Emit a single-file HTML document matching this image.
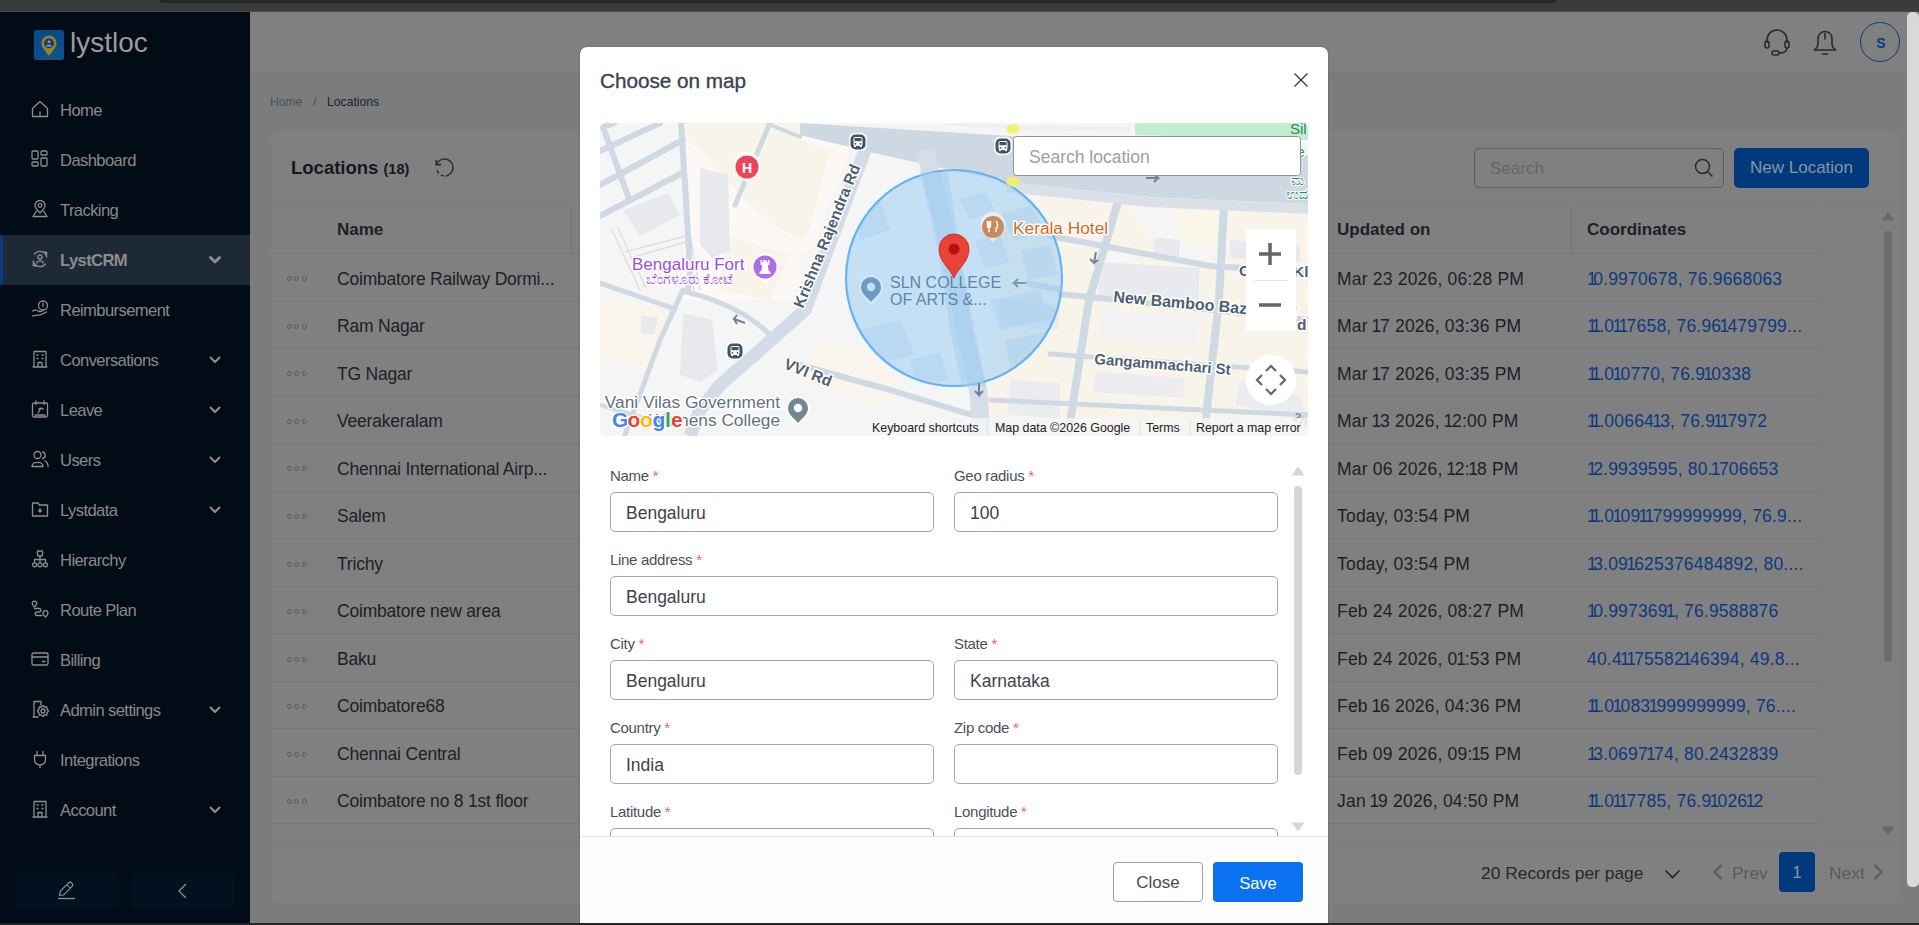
<!DOCTYPE html>
<html><head><meta charset="utf-8"><title>Choose on map</title><style>
*{box-sizing:border-box;margin:0;padding:0}
html,body{width:1919px;height:925px;overflow:hidden;background:#7a7c7d;font-family:"Liberation Sans",sans-serif}
.a{position:absolute}
.t{position:absolute;white-space:nowrap;line-height:20px;height:20px}
</style></head><body>
<div class="a" style="left:0;top:0;width:1919px;height:12px;background:#3b3b3b"></div>
<div class="a" style="left:0;top:11px;width:1919px;height:1px;background:#484848"></div>
<div class="a" style="left:160px;top:0;width:1396px;height:3px;background:#272727;border-radius:0 0 6px 6px"></div>
<div class="a" style="left:0;top:12px;width:250px;height:911px;background:#020c17"></div>
<div class="a" style="left:34px;top:30px;width:30px;height:30px;border-radius:3px;background:linear-gradient(160deg,#044a8c 0%,#0b4f8a 60%,#0e5590 100%)"></div>
<svg class="a" style="left:34px;top:30px" width="30" height="30" viewBox="0 0 30 30"><path d="M15 26 C10 19.5 7.5 17 7.5 13 A7.5 7.5 0 0 1 22.5 13 C22.5 17 20 19.5 15 26Z" fill="#9a8318"/><circle cx="15" cy="13.2" r="5" fill="#1b3a78"/><circle cx="15" cy="11.8" r="1.4" fill="#8a9ab8"/><path d="M11.8 16.5 C12.5 14.2 17.5 14.2 18.2 16.5Z" fill="#8a9ab8"/></svg>
<div class="t" style="left:70px;top:26px;font-size:28px;line-height:34px;height:34px;color:#9b9b9b;letter-spacing:0px">lystloc</div>
<div class="t" style="left:60px;top:100.5px;font-size:16.6px;color:#898989;font-weight:normal;letter-spacing:-0.6px">Home</div>
<svg class="a" style="left:31px;top:100px" width="18" height="18" viewBox="0 0 18 18"><path d="M1.5 8.5 L9 1.5 L16.5 8.5 V16.5 H1.5 Z M9 12 V16.5" stroke="#8e8e8e" stroke-width="1.3" fill="none" stroke-linecap="round" stroke-linejoin="round"/></svg>
<div class="t" style="left:60px;top:150.5px;font-size:16.6px;color:#898989;font-weight:normal;letter-spacing:-0.6px">Dashboard</div>
<svg class="a" style="left:31px;top:150px" width="18" height="18" viewBox="0 0 18 18"><rect x="1" y="1" width="6" height="8" rx="1" stroke="#8e8e8e" stroke-width="1.3" fill="none" stroke-linecap="round" stroke-linejoin="round"/><rect x="10" y="1" width="6" height="4" rx="1" stroke="#8e8e8e" stroke-width="1.3" fill="none" stroke-linecap="round" stroke-linejoin="round"/><rect x="1" y="12" width="6" height="4" rx="1" stroke="#8e8e8e" stroke-width="1.3" fill="none" stroke-linecap="round" stroke-linejoin="round"/><rect x="10" y="8" width="6" height="8" rx="1" stroke="#8e8e8e" stroke-width="1.3" fill="none" stroke-linecap="round" stroke-linejoin="round"/></svg>
<div class="t" style="left:60px;top:200.5px;font-size:16.6px;color:#898989;font-weight:normal;letter-spacing:-0.6px">Tracking</div>
<svg class="a" style="left:31px;top:200px" width="18" height="18" viewBox="0 0 18 18"><path d="M9 13 C5 9 4 7.5 4 5.5 A5 5 0 0 1 14 5.5 C14 7.5 13 9 9 13 Z" stroke="#8e8e8e" stroke-width="1.3" fill="none" stroke-linecap="round" stroke-linejoin="round"/><circle cx="9" cy="5.5" r="1.8" stroke="#8e8e8e" stroke-width="1.3" fill="none" stroke-linecap="round" stroke-linejoin="round"/><path d="M5.5 11 L2 16.5 H16 L12.5 11" stroke="#8e8e8e" stroke-width="1.3" fill="none" stroke-linecap="round" stroke-linejoin="round"/></svg>
<div class="a" style="left:0;top:235px;width:250px;height:50px;background:#1e2937"></div>
<div class="a" style="left:0;top:235px;width:3px;height:50px;background:#0b3a7e"></div>
<div class="t" style="left:60px;top:250.5px;font-size:16.6px;color:#8c8c8c;font-weight:bold;letter-spacing:-0.6px">LystCRM</div>
<svg class="a" style="left:31px;top:250px" width="18" height="18" viewBox="0 0 18 18"><path d="M2.2 11 A7 7 0 0 0 14.5 14 M15.8 7 A7 7 0 0 0 3.5 4" stroke="#8e8e8e" stroke-width="1.3" fill="none" stroke-linecap="round" stroke-linejoin="round"/><path d="M13 1.8 L15.8 2.5 L15.5 5.3 M5 16.2 L2.2 15.5 L2.5 12.7" stroke="#8e8e8e" stroke-width="1.3" fill="none" stroke-linecap="round" stroke-linejoin="round"/><circle cx="9" cy="7" r="2" stroke="#8e8e8e" stroke-width="1.3" fill="none" stroke-linecap="round" stroke-linejoin="round"/><path d="M5.8 12.8 C6.2 10.2 11.8 10.2 12.2 12.8" stroke="#8e8e8e" stroke-width="1.3" fill="none" stroke-linecap="round" stroke-linejoin="round"/></svg>
<svg class="a" style="left:209px;top:256px" width="12" height="8" viewBox="0 0 12 8"><path d="M1.5 1.5 L6 6 L10.5 1.5" stroke="#8e8e8e" stroke-width="2.8" fill="none" stroke-linecap="round" stroke-linejoin="round"/></svg>
<div class="t" style="left:60px;top:300.5px;font-size:16.6px;color:#898989;font-weight:normal;letter-spacing:-0.6px">Reimbursement</div>
<svg class="a" style="left:31px;top:300px" width="18" height="18" viewBox="0 0 18 18"><circle cx="12" cy="5.5" r="4.5" stroke="#8e8e8e" stroke-width="1.3" fill="none" stroke-linecap="round" stroke-linejoin="round"/><path d="M12 3.5 V6.5" stroke="#8e8e8e" stroke-width="1.3" fill="none" stroke-linecap="round" stroke-linejoin="round"/><path d="M1.5 11 C4 9.5 6 10 8 11.5 H11 M1.5 16 C5 14.5 9 16.5 15.5 12" stroke="#8e8e8e" stroke-width="1.3" fill="none" stroke-linecap="round" stroke-linejoin="round"/></svg>
<div class="t" style="left:60px;top:350.5px;font-size:16.6px;color:#898989;font-weight:normal;letter-spacing:-0.6px">Conversations</div>
<svg class="a" style="left:31px;top:350px" width="18" height="18" viewBox="0 0 18 18"><path d="M2 17 H16 M3 17 V1.5 H15 V17 M7 17 V12.5 H11 V17 M6 5 H7 M11 5 H12 M6 8.5 H7 M11 8.5 H12" stroke="#8e8e8e" stroke-width="1.3" fill="none" stroke-linecap="round" stroke-linejoin="round"/></svg>
<svg class="a" style="left:209px;top:356px" width="12" height="8" viewBox="0 0 12 8"><path d="M1.5 1.5 L6 6 L10.5 1.5" stroke="#8e8e8e" stroke-width="2" fill="none" stroke-linecap="round" stroke-linejoin="round"/></svg>
<div class="t" style="left:60px;top:400.5px;font-size:16.6px;color:#898989;font-weight:normal;letter-spacing:-0.6px">Leave</div>
<svg class="a" style="left:31px;top:400px" width="18" height="18" viewBox="0 0 18 18"><rect x="1.5" y="3" width="15" height="14" rx="1.5" stroke="#8e8e8e" stroke-width="1.3" fill="none" stroke-linecap="round" stroke-linejoin="round"/><path d="M5 1 V4.5 M13 1 V4.5 M4 15 H14 M7 13 L10 8 M8 9 C9 8 11 8 12 9" stroke="#8e8e8e" stroke-width="1.3" fill="none" stroke-linecap="round" stroke-linejoin="round"/></svg>
<svg class="a" style="left:209px;top:406px" width="12" height="8" viewBox="0 0 12 8"><path d="M1.5 1.5 L6 6 L10.5 1.5" stroke="#8e8e8e" stroke-width="2" fill="none" stroke-linecap="round" stroke-linejoin="round"/></svg>
<div class="t" style="left:60px;top:450.5px;font-size:16.6px;color:#898989;font-weight:normal;letter-spacing:-0.6px">Users</div>
<svg class="a" style="left:31px;top:450px" width="18" height="18" viewBox="0 0 18 18"><circle cx="6.5" cy="5" r="3.5" stroke="#8e8e8e" stroke-width="1.3" fill="none" stroke-linecap="round" stroke-linejoin="round"/><path d="M1 16.5 C1 11 12 11 12 16.5 Z" stroke="#8e8e8e" stroke-width="1.3" fill="none" stroke-linecap="round" stroke-linejoin="round"/><path d="M11.5 2 A3.3 3.3 0 0 1 11.5 8.5 M14 11 C16 12 17 13.5 17 16.5" stroke="#8e8e8e" stroke-width="1.3" fill="none" stroke-linecap="round" stroke-linejoin="round"/></svg>
<svg class="a" style="left:209px;top:456px" width="12" height="8" viewBox="0 0 12 8"><path d="M1.5 1.5 L6 6 L10.5 1.5" stroke="#8e8e8e" stroke-width="2" fill="none" stroke-linecap="round" stroke-linejoin="round"/></svg>
<div class="t" style="left:60px;top:500.5px;font-size:16.6px;color:#898989;font-weight:normal;letter-spacing:-0.6px">Lystdata</div>
<svg class="a" style="left:31px;top:500px" width="18" height="18" viewBox="0 0 18 18"><path d="M1.5 3 H7 L8.5 5 H16.5 V16 H1.5 Z" stroke="#8e8e8e" stroke-width="1.3" fill="none" stroke-linecap="round" stroke-linejoin="round"/><path d="M9 8.5 V12 M7.5 10.5 L9 12 L10.5 10.5" stroke="#8e8e8e" stroke-width="1.3" fill="none" stroke-linecap="round" stroke-linejoin="round"/></svg>
<svg class="a" style="left:209px;top:506px" width="12" height="8" viewBox="0 0 12 8"><path d="M1.5 1.5 L6 6 L10.5 1.5" stroke="#8e8e8e" stroke-width="2" fill="none" stroke-linecap="round" stroke-linejoin="round"/></svg>
<div class="t" style="left:60px;top:550.5px;font-size:16.6px;color:#898989;font-weight:normal;letter-spacing:-0.6px">Hierarchy</div>
<svg class="a" style="left:31px;top:550px" width="18" height="18" viewBox="0 0 18 18"><rect x="6.5" y="1" width="5" height="5" rx="0.8" stroke="#8e8e8e" stroke-width="1.3" fill="none" stroke-linecap="round" stroke-linejoin="round"/><path d="M9 6 V9 M3.5 12.5 V9.5 H14.5 V12.5 M9 9.5 V12.5" stroke="#8e8e8e" stroke-width="1.3" fill="none" stroke-linecap="round" stroke-linejoin="round"/><circle cx="3.5" cy="14.8" r="2" stroke="#8e8e8e" stroke-width="1.3" fill="none" stroke-linecap="round" stroke-linejoin="round"/><circle cx="9" cy="14.8" r="2" stroke="#8e8e8e" stroke-width="1.3" fill="none" stroke-linecap="round" stroke-linejoin="round"/><circle cx="14.5" cy="14.8" r="2" stroke="#8e8e8e" stroke-width="1.3" fill="none" stroke-linecap="round" stroke-linejoin="round"/></svg>
<div class="t" style="left:60px;top:600.5px;font-size:16.6px;color:#898989;font-weight:normal;letter-spacing:-0.6px">Route Plan</div>
<svg class="a" style="left:31px;top:600px" width="18" height="18" viewBox="0 0 18 18"><path d="M3.5 7 C1.5 5 1.2 4.2 1.2 3.5 A2.3 2.3 0 0 1 5.8 3.5 C5.8 4.2 5.5 5 3.5 7Z" stroke="#8e8e8e" stroke-width="1.3" fill="none" stroke-linecap="round" stroke-linejoin="round"/><path d="M14.5 17 C12.2 14.8 12 14 12 13.2 A2.5 2.5 0 0 1 17 13.2 C17 14 16.8 14.8 14.5 17Z" stroke="#8e8e8e" stroke-width="1.3" fill="none" stroke-linecap="round" stroke-linejoin="round"/><path d="M3.5 8.5 L8 8.5 C10.5 8.5 10.5 12 8 12 L6 12 C3.5 12 3.5 15.5 6 15.5 L11 15.5" stroke="#8e8e8e" stroke-width="1.3" fill="none" stroke-linecap="round" stroke-linejoin="round" stroke-dasharray="0"/></svg>
<div class="t" style="left:60px;top:650.5px;font-size:16.6px;color:#898989;font-weight:normal;letter-spacing:-0.6px">Billing</div>
<svg class="a" style="left:31px;top:650px" width="18" height="18" viewBox="0 0 18 18"><rect x="1" y="3" width="16" height="12" rx="1.5" stroke="#8e8e8e" stroke-width="1.3" fill="none" stroke-linecap="round" stroke-linejoin="round"/><path d="M1 7 H17 M11.5 11.5 H14" stroke="#8e8e8e" stroke-width="1.3" fill="none" stroke-linecap="round" stroke-linejoin="round"/></svg>
<div class="t" style="left:60px;top:700.5px;font-size:16.6px;color:#898989;font-weight:normal;letter-spacing:-0.6px">Admin settings</div>
<svg class="a" style="left:31px;top:700px" width="18" height="18" viewBox="0 0 18 18"><path d="M2 17 H7 M3 17 V1.5 H10 V5" stroke="#8e8e8e" stroke-width="1.3" fill="none" stroke-linecap="round" stroke-linejoin="round"/><circle cx="12" cy="11" r="2" stroke="#8e8e8e" stroke-width="1.3" fill="none" stroke-linecap="round" stroke-linejoin="round"/><path d="M12 5.5 L13.5 7 L15.8 6.8 L16 9 L17.5 11 L16 13 L15.8 15.2 L13.5 15 L12 16.5 L10.5 15 L8.2 15.2 L8 13 L6.5 11 L8 9 L8.2 6.8 L10.5 7 Z" stroke="#8e8e8e" stroke-width="1.3" fill="none" stroke-linecap="round" stroke-linejoin="round"/></svg>
<svg class="a" style="left:209px;top:706px" width="12" height="8" viewBox="0 0 12 8"><path d="M1.5 1.5 L6 6 L10.5 1.5" stroke="#8e8e8e" stroke-width="2" fill="none" stroke-linecap="round" stroke-linejoin="round"/></svg>
<div class="t" style="left:60px;top:750.5px;font-size:16.6px;color:#898989;font-weight:normal;letter-spacing:-0.6px">Integrations</div>
<svg class="a" style="left:31px;top:750px" width="18" height="18" viewBox="0 0 18 18"><path d="M6 1.5 V5.5 M12 1.5 V5.5 M3.5 5.5 H14.5 V10 A5.5 5 0 0 1 3.5 10 Z M9 15 V17.5" stroke="#8e8e8e" stroke-width="1.3" fill="none" stroke-linecap="round" stroke-linejoin="round"/></svg>
<div class="t" style="left:60px;top:800.5px;font-size:16.6px;color:#898989;font-weight:normal;letter-spacing:-0.6px">Account</div>
<svg class="a" style="left:31px;top:800px" width="18" height="18" viewBox="0 0 18 18"><path d="M2 17 H16 M3 17 V1.5 H15 V17 M7 17 V12.5 H11 V17 M6 5 H7 M11 5 H12 M6 8.5 H7 M11 8.5 H12" stroke="#8e8e8e" stroke-width="1.3" fill="none" stroke-linecap="round" stroke-linejoin="round"/></svg>
<svg class="a" style="left:209px;top:806px" width="12" height="8" viewBox="0 0 12 8"><path d="M1.5 1.5 L6 6 L10.5 1.5" stroke="#8e8e8e" stroke-width="2" fill="none" stroke-linecap="round" stroke-linejoin="round"/></svg>
<div class="a" style="left:15px;top:872px;width:104px;height:37px;border-radius:5px;background:#03101f"></div>
<div class="a" style="left:131px;top:872px;width:104px;height:37px;border-radius:5px;background:#03101f"></div>
<svg class="a" style="left:56px;top:879px" width="22" height="22" viewBox="0 0 22 22"><path d="M3.5 16.5 L4.2 12.26 L12.33 4.13 A2.5 2.5 0 0 1 15.87 7.67 L7.74 15.8 Z M10.9 5.6 L14.4 9.1" stroke="#8e8e8e" stroke-width="1.2" fill="none" stroke-linejoin="round"/><path d="M2 19.5 H19" stroke="#8e8e8e" stroke-width="1.3"/></svg>
<svg class="a" style="left:176px;top:882px" width="12" height="18" viewBox="0 0 12 18"><path d="M9.5 2.5 L3 9 L9.5 15.5" stroke="#8e8e8e" stroke-width="1.3" fill="none" stroke-linecap="round"/></svg>
<div class="a" style="left:250px;top:12px;width:1657px;height:60px;background:#808080"></div>
<div class="a" style="left:250px;top:72px;width:1657px;height:1px;background:#7b7b7b"></div>
<svg class="a" style="left:1762px;top:28px" width="30" height="30" viewBox="0 0 30 30"><path d="M5 15 V12 A10 10 0 0 1 25 12 V15" stroke="#2a2a2a" stroke-width="1.6" fill="none"/><rect x="3" y="13" width="4" height="7" rx="2" stroke="#2a2a2a" stroke-width="1.6" fill="none"/><rect x="23" y="13" width="4" height="7" rx="2" stroke="#2a2a2a" stroke-width="1.6" fill="none"/><path d="M25 20 C25 24 21 25 17 25" stroke="#2a2a2a" stroke-width="1.6" fill="none"/><rect x="10" y="23" width="7" height="4" rx="2" stroke="#2a2a2a" stroke-width="1.6" fill="none"/></svg>
<svg class="a" style="left:1811px;top:28px" width="28" height="28" viewBox="0 0 28 28"><path d="M3.5 22 H24.5 C22.5 20.5 21 19 21 15.5 V10.5 A7 7 0 0 0 7 10.5 V15.5 C7 19 5.5 20.5 3.5 22 Z" stroke="#2a2a2a" stroke-width="1.6" fill="none" stroke-linejoin="round"/><path d="M14 5.5 V11" stroke="#2a2a2a" stroke-width="1.6" stroke-linecap="round"/><path d="M11.5 26 H16.5" stroke="#2a2a2a" stroke-width="1.6" stroke-linecap="round"/></svg>
<div class="a" style="left:1860px;top:22px;width:40px;height:40px;border-radius:50%;border:1.5px solid #0b3a80"></div>
<div class="t" style="left:1861px;top:33px;width:40px;text-align:center;font-size:14px;font-weight:bold;color:#0b3a80">S</div>
<div class="t" style="left:270px;top:92px;font-size:12.2px;color:#4e5256">Home</div>
<div class="t" style="left:313px;top:92px;font-size:12.2px;color:#4e5256">/</div>
<div class="t" style="left:327px;top:92px;font-size:12.2px;color:#1f2328">Locations</div>
<div class="a" style="left:271px;top:130px;width:1628px;height:774px;background:#808080;border-radius:10px"></div>
<div class="t" style="left:291px;top:158px;font-size:18.5px;font-weight:bold;color:#15191f">Locations <span style="font-size:14.5px">(18)</span></div>
<svg class="a" style="left:434px;top:157px" width="22" height="22" viewBox="0 0 22 22"><path d="M2.7 7.1 A8.5 8.5 0 1 1 11.74 18.97" stroke="#2a2d30" stroke-width="1.5" fill="none"/><path d="M10.26 18.97 A8.5 8.5 0 0 1 2.63 11.98" stroke="#2a2d30" stroke-width="1.5" fill="none" stroke-dasharray="3.6 2.4"/><path d="M2.3 3 V7.6 H7" stroke="#2a2d30" stroke-width="1.6" fill="none" stroke-linejoin="miter"/></svg>
<div class="a" style="left:1474px;top:148px;width:250px;height:40px;border:1px solid #5e5e5e;border-radius:5px"></div>
<div class="t" style="left:1490px;top:159.3px;font-size:17px;color:#666">Search</div>
<svg class="a" style="left:1694px;top:158px" width="20" height="20" viewBox="0 0 20 20"><circle cx="8.5" cy="8.5" r="7" stroke="#2a2a2a" stroke-width="1.5" fill="none"/><path d="M13.5 13.5 L18.5 18.5" stroke="#2a2a2a" stroke-width="1.5"/></svg>
<div class="a" style="left:1734px;top:148px;width:135px;height:40px;border-radius:5px;background:#003a7d"></div>
<div class="t" style="left:1734px;top:158px;width:135px;text-align:center;font-size:17px;color:#8a95a3">New Location</div>
<div class="a" style="left:271px;top:205px;width:1628px;height:1px;background:#7a7a7a"></div>
<div class="a" style="left:271px;top:253px;width:1550px;height:1px;background:#777"></div>
<div class="a" style="left:571px;top:206px;width:1px;height:47px;background:#777"></div>
<div class="a" style="left:1571px;top:206px;width:1px;height:47px;background:#777"></div>
<div class="a" style="left:1821px;top:206px;width:1px;height:636px;background:#7a7a7a"></div>
<div class="t" style="left:337px;top:220.3px;font-size:17px;font-weight:bold;color:#1d2127">Name</div>
<div class="t" style="left:1337px;top:220.3px;font-size:17px;font-weight:bold;color:#1d2127">Updated on</div>
<div class="t" style="left:1587px;top:220.3px;font-size:17px;font-weight:bold;color:#1d2127">Coordinates</div>
<div class="a" style="left:271px;top:300.5px;width:1550px;height:1px;background:#787878"></div>
<div class="a" style="left:287.0px;top:276.4px;width:5px;height:5px;border:1px solid #5a5a5a;border-radius:50%"></div>
<div class="a" style="left:294.3px;top:276.4px;width:5px;height:5px;border:1px solid #5a5a5a;border-radius:50%"></div>
<div class="a" style="left:301.6px;top:276.4px;width:5px;height:5px;border:1px solid #5a5a5a;border-radius:50%"></div>
<div class="t" style="left:337px;top:268.6px;font-size:17.5px;letter-spacing:-0.2px;color:#1d2127">Coimbatore Railway Dormi...</div>
<div class="t" style="left:1337px;top:268.6px;font-size:17.5px;letter-spacing:0.2px;color:#1d2127">Mar 23 2026, 06:28 PM</div>
<div class="t" style="left:1587px;top:268.6px;font-size:17.5px;letter-spacing:0.2px;color:#0c3a80"><span style="letter-spacing:-3.60px">1</span>0.9970678, 76.9668063</div>
<div class="a" style="left:271px;top:348.0px;width:1550px;height:1px;background:#787878"></div>
<div class="a" style="left:287.0px;top:323.9px;width:5px;height:5px;border:1px solid #5a5a5a;border-radius:50%"></div>
<div class="a" style="left:294.3px;top:323.9px;width:5px;height:5px;border:1px solid #5a5a5a;border-radius:50%"></div>
<div class="a" style="left:301.6px;top:323.9px;width:5px;height:5px;border:1px solid #5a5a5a;border-radius:50%"></div>
<div class="t" style="left:337px;top:316.1px;font-size:17.5px;letter-spacing:-0.2px;color:#1d2127">Ram Nagar</div>
<div class="t" style="left:1337px;top:316.1px;font-size:17.5px;letter-spacing:0.2px;color:#1d2127">Mar <span style="margin-left:-1.40px;letter-spacing:-1.20px">1</span>7 2026, 03:36 PM</div>
<div class="t" style="left:1587px;top:316.1px;font-size:17.5px;letter-spacing:0.2px;color:#0c3a80"><span style="letter-spacing:-3.60px">1</span><span style="margin-left:-1.90px;letter-spacing:-1.70px">1</span>.0<span style="margin-left:-1.90px;letter-spacing:-1.70px">1</span><span style="margin-left:-1.90px;letter-spacing:-1.70px">1</span>7658, 76.96<span style="margin-left:-1.90px;letter-spacing:-1.70px">1</span>479799...</div>
<div class="a" style="left:271px;top:395.5px;width:1550px;height:1px;background:#787878"></div>
<div class="a" style="left:287.0px;top:371.4px;width:5px;height:5px;border:1px solid #5a5a5a;border-radius:50%"></div>
<div class="a" style="left:294.3px;top:371.4px;width:5px;height:5px;border:1px solid #5a5a5a;border-radius:50%"></div>
<div class="a" style="left:301.6px;top:371.4px;width:5px;height:5px;border:1px solid #5a5a5a;border-radius:50%"></div>
<div class="t" style="left:337px;top:363.6px;font-size:17.5px;letter-spacing:-0.2px;color:#1d2127">TG Nagar</div>
<div class="t" style="left:1337px;top:363.6px;font-size:17.5px;letter-spacing:0.2px;color:#1d2127">Mar <span style="margin-left:-1.40px;letter-spacing:-1.20px">1</span>7 2026, 03:35 PM</div>
<div class="t" style="left:1587px;top:363.6px;font-size:17.5px;letter-spacing:0.2px;color:#0c3a80"><span style="letter-spacing:-3.60px">1</span><span style="margin-left:-1.90px;letter-spacing:-1.70px">1</span>.0<span style="margin-left:-1.90px;letter-spacing:-1.70px">1</span>0770, 76.9<span style="margin-left:-1.90px;letter-spacing:-1.70px">1</span>0338</div>
<div class="a" style="left:271px;top:443.0px;width:1550px;height:1px;background:#787878"></div>
<div class="a" style="left:287.0px;top:418.9px;width:5px;height:5px;border:1px solid #5a5a5a;border-radius:50%"></div>
<div class="a" style="left:294.3px;top:418.9px;width:5px;height:5px;border:1px solid #5a5a5a;border-radius:50%"></div>
<div class="a" style="left:301.6px;top:418.9px;width:5px;height:5px;border:1px solid #5a5a5a;border-radius:50%"></div>
<div class="t" style="left:337px;top:411.1px;font-size:17.5px;letter-spacing:-0.2px;color:#1d2127">Veerakeralam</div>
<div class="t" style="left:1337px;top:411.1px;font-size:17.5px;letter-spacing:0.2px;color:#1d2127">Mar <span style="margin-left:-1.40px;letter-spacing:-1.20px">1</span>3 2026, <span style="margin-left:-1.40px;letter-spacing:-1.20px">1</span>2:00 PM</div>
<div class="t" style="left:1587px;top:411.1px;font-size:17.5px;letter-spacing:0.2px;color:#0c3a80"><span style="letter-spacing:-3.60px">1</span><span style="margin-left:-1.90px;letter-spacing:-1.70px">1</span>.00664<span style="margin-left:-1.90px;letter-spacing:-1.70px">1</span>3, 76.9<span style="margin-left:-1.90px;letter-spacing:-1.70px">1</span><span style="margin-left:-1.90px;letter-spacing:-1.70px">1</span>7972</div>
<div class="a" style="left:271px;top:490.5px;width:1550px;height:1px;background:#787878"></div>
<div class="a" style="left:287.0px;top:466.4px;width:5px;height:5px;border:1px solid #5a5a5a;border-radius:50%"></div>
<div class="a" style="left:294.3px;top:466.4px;width:5px;height:5px;border:1px solid #5a5a5a;border-radius:50%"></div>
<div class="a" style="left:301.6px;top:466.4px;width:5px;height:5px;border:1px solid #5a5a5a;border-radius:50%"></div>
<div class="t" style="left:337px;top:458.6px;font-size:17.5px;letter-spacing:-0.2px;color:#1d2127">Chennai International Airp...</div>
<div class="t" style="left:1337px;top:458.6px;font-size:17.5px;letter-spacing:0.2px;color:#1d2127">Mar 06 2026, <span style="margin-left:-1.40px;letter-spacing:-1.20px">1</span>2:<span style="margin-left:-1.40px;letter-spacing:-1.20px">1</span>8 PM</div>
<div class="t" style="left:1587px;top:458.6px;font-size:17.5px;letter-spacing:0.2px;color:#0c3a80"><span style="letter-spacing:-3.60px">1</span>2.9939595, 80.<span style="margin-left:-1.90px;letter-spacing:-1.70px">1</span>706653</div>
<div class="a" style="left:271px;top:538.0px;width:1550px;height:1px;background:#787878"></div>
<div class="a" style="left:287.0px;top:514.0px;width:5px;height:5px;border:1px solid #5a5a5a;border-radius:50%"></div>
<div class="a" style="left:294.3px;top:514.0px;width:5px;height:5px;border:1px solid #5a5a5a;border-radius:50%"></div>
<div class="a" style="left:301.6px;top:514.0px;width:5px;height:5px;border:1px solid #5a5a5a;border-radius:50%"></div>
<div class="t" style="left:337px;top:506.1px;font-size:17.5px;letter-spacing:-0.2px;color:#1d2127">Salem</div>
<div class="t" style="left:1337px;top:506.1px;font-size:17.5px;letter-spacing:0.2px;color:#1d2127">Today, 03:54 PM</div>
<div class="t" style="left:1587px;top:506.1px;font-size:17.5px;letter-spacing:0.2px;color:#0c3a80"><span style="letter-spacing:-3.60px">1</span><span style="margin-left:-1.90px;letter-spacing:-1.70px">1</span>.0<span style="margin-left:-1.90px;letter-spacing:-1.70px">1</span>09<span style="margin-left:-1.90px;letter-spacing:-1.70px">1</span><span style="margin-left:-1.90px;letter-spacing:-1.70px">1</span>799999999, 76.9...</div>
<div class="a" style="left:271px;top:585.5px;width:1550px;height:1px;background:#787878"></div>
<div class="a" style="left:287.0px;top:561.5px;width:5px;height:5px;border:1px solid #5a5a5a;border-radius:50%"></div>
<div class="a" style="left:294.3px;top:561.5px;width:5px;height:5px;border:1px solid #5a5a5a;border-radius:50%"></div>
<div class="a" style="left:301.6px;top:561.5px;width:5px;height:5px;border:1px solid #5a5a5a;border-radius:50%"></div>
<div class="t" style="left:337px;top:553.5px;font-size:17.5px;letter-spacing:-0.2px;color:#1d2127">Trichy</div>
<div class="t" style="left:1337px;top:553.5px;font-size:17.5px;letter-spacing:0.2px;color:#1d2127">Today, 03:54 PM</div>
<div class="t" style="left:1587px;top:553.5px;font-size:17.5px;letter-spacing:0.2px;color:#0c3a80"><span style="letter-spacing:-3.60px">1</span>3.09<span style="margin-left:-1.90px;letter-spacing:-1.70px">1</span>625376484892, 80....</div>
<div class="a" style="left:271px;top:633.0px;width:1550px;height:1px;background:#787878"></div>
<div class="a" style="left:287.0px;top:609.0px;width:5px;height:5px;border:1px solid #5a5a5a;border-radius:50%"></div>
<div class="a" style="left:294.3px;top:609.0px;width:5px;height:5px;border:1px solid #5a5a5a;border-radius:50%"></div>
<div class="a" style="left:301.6px;top:609.0px;width:5px;height:5px;border:1px solid #5a5a5a;border-radius:50%"></div>
<div class="t" style="left:337px;top:601.0px;font-size:17.5px;letter-spacing:-0.2px;color:#1d2127">Coimbatore new area</div>
<div class="t" style="left:1337px;top:601.0px;font-size:17.5px;letter-spacing:0.2px;color:#1d2127">Feb 24 2026, 08:27 PM</div>
<div class="t" style="left:1587px;top:601.0px;font-size:17.5px;letter-spacing:0.2px;color:#0c3a80"><span style="letter-spacing:-3.60px">1</span>0.997369<span style="margin-left:-1.90px;letter-spacing:-1.70px">1</span>, 76.9588876</div>
<div class="a" style="left:271px;top:680.5px;width:1550px;height:1px;background:#787878"></div>
<div class="a" style="left:287.0px;top:656.5px;width:5px;height:5px;border:1px solid #5a5a5a;border-radius:50%"></div>
<div class="a" style="left:294.3px;top:656.5px;width:5px;height:5px;border:1px solid #5a5a5a;border-radius:50%"></div>
<div class="a" style="left:301.6px;top:656.5px;width:5px;height:5px;border:1px solid #5a5a5a;border-radius:50%"></div>
<div class="t" style="left:337px;top:648.5px;font-size:17.5px;letter-spacing:-0.2px;color:#1d2127">Baku</div>
<div class="t" style="left:1337px;top:648.5px;font-size:17.5px;letter-spacing:0.2px;color:#1d2127">Feb 24 2026, 0<span style="margin-left:-1.40px;letter-spacing:-1.20px">1</span>:53 PM</div>
<div class="t" style="left:1587px;top:648.5px;font-size:17.5px;letter-spacing:0.2px;color:#0c3a80">40.4<span style="margin-left:-1.90px;letter-spacing:-1.70px">1</span><span style="margin-left:-1.90px;letter-spacing:-1.70px">1</span>75582<span style="margin-left:-1.90px;letter-spacing:-1.70px">1</span>46394, 49.8...</div>
<div class="a" style="left:271px;top:728.0px;width:1550px;height:1px;background:#787878"></div>
<div class="a" style="left:287.0px;top:704.0px;width:5px;height:5px;border:1px solid #5a5a5a;border-radius:50%"></div>
<div class="a" style="left:294.3px;top:704.0px;width:5px;height:5px;border:1px solid #5a5a5a;border-radius:50%"></div>
<div class="a" style="left:301.6px;top:704.0px;width:5px;height:5px;border:1px solid #5a5a5a;border-radius:50%"></div>
<div class="t" style="left:337px;top:696.0px;font-size:17.5px;letter-spacing:-0.2px;color:#1d2127">Coimbatore68</div>
<div class="t" style="left:1337px;top:696.0px;font-size:17.5px;letter-spacing:0.2px;color:#1d2127">Feb <span style="margin-left:-1.40px;letter-spacing:-1.20px">1</span>6 2026, 04:36 PM</div>
<div class="t" style="left:1587px;top:696.0px;font-size:17.5px;letter-spacing:0.2px;color:#0c3a80"><span style="letter-spacing:-3.60px">1</span><span style="margin-left:-1.90px;letter-spacing:-1.70px">1</span>.0<span style="margin-left:-1.90px;letter-spacing:-1.70px">1</span>083<span style="margin-left:-1.90px;letter-spacing:-1.70px">1</span>999999999, 76....</div>
<div class="a" style="left:271px;top:775.5px;width:1550px;height:1px;background:#787878"></div>
<div class="a" style="left:287.0px;top:751.5px;width:5px;height:5px;border:1px solid #5a5a5a;border-radius:50%"></div>
<div class="a" style="left:294.3px;top:751.5px;width:5px;height:5px;border:1px solid #5a5a5a;border-radius:50%"></div>
<div class="a" style="left:301.6px;top:751.5px;width:5px;height:5px;border:1px solid #5a5a5a;border-radius:50%"></div>
<div class="t" style="left:337px;top:743.5px;font-size:17.5px;letter-spacing:-0.2px;color:#1d2127">Chennai Central</div>
<div class="t" style="left:1337px;top:743.5px;font-size:17.5px;letter-spacing:0.2px;color:#1d2127">Feb 09 2026, 09:<span style="margin-left:-1.40px;letter-spacing:-1.20px">1</span>5 PM</div>
<div class="t" style="left:1587px;top:743.5px;font-size:17.5px;letter-spacing:0.2px;color:#0c3a80"><span style="letter-spacing:-3.60px">1</span>3.0697<span style="margin-left:-1.90px;letter-spacing:-1.70px">1</span>74, 80.2432839</div>
<div class="a" style="left:271px;top:823.0px;width:1550px;height:1px;background:#787878"></div>
<div class="a" style="left:287.0px;top:799.0px;width:5px;height:5px;border:1px solid #5a5a5a;border-radius:50%"></div>
<div class="a" style="left:294.3px;top:799.0px;width:5px;height:5px;border:1px solid #5a5a5a;border-radius:50%"></div>
<div class="a" style="left:301.6px;top:799.0px;width:5px;height:5px;border:1px solid #5a5a5a;border-radius:50%"></div>
<div class="t" style="left:337px;top:791.0px;font-size:17.5px;letter-spacing:-0.2px;color:#1d2127">Coimbatore no 8 1st floor</div>
<div class="t" style="left:1337px;top:791.0px;font-size:17.5px;letter-spacing:0.2px;color:#1d2127">Jan <span style="margin-left:-1.40px;letter-spacing:-1.20px">1</span>9 2026, 04:50 PM</div>
<div class="t" style="left:1587px;top:791.0px;font-size:17.5px;letter-spacing:0.2px;color:#0c3a80"><span style="letter-spacing:-3.60px">1</span><span style="margin-left:-1.90px;letter-spacing:-1.70px">1</span>.0<span style="margin-left:-1.90px;letter-spacing:-1.70px">1</span><span style="margin-left:-1.90px;letter-spacing:-1.70px">1</span>7785, 76.9<span style="margin-left:-1.90px;letter-spacing:-1.70px">1</span>026<span style="margin-left:-1.90px;letter-spacing:-1.70px">1</span>2</div>
<svg class="a" style="left:1881px;top:211px" width="14" height="10" viewBox="0 0 14 10"><path d="M7 0.5 L13.5 9.5 H0.5Z" fill="#6a6a6a"/></svg>
<div class="a" style="left:1884px;top:231px;width:8px;height:431px;border-radius:4px;background:#6c6c6c"></div>
<svg class="a" style="left:1881px;top:826px" width="14" height="10" viewBox="0 0 14 10"><path d="M7 9.5 L13.5 0.5 H0.5Z" fill="#6a6a6a"/></svg>
<div class="a" style="left:271px;top:842px;width:1628px;height:1px;background:#7a7a7a"></div>
<div class="t" style="left:1481px;top:863.3px;font-size:17.4px;color:#25282c">20 Records per page</div>
<svg class="a" style="left:1664px;top:869px" width="17" height="10" viewBox="0 0 17 10"><path d="M1.5 1.5 L8.5 8.5 L15.5 1.5" stroke="#25282c" stroke-width="1.7" fill="none"/></svg>
<svg class="a" style="left:1712px;top:864px" width="11" height="16" viewBox="0 0 11 16"><path d="M9 1.5 L2.5 8 L9 14.5" stroke="#5c5c5c" stroke-width="2.2" fill="none" stroke-linecap="round"/></svg>
<div class="t" style="left:1732px;top:863.3px;font-size:17.4px;color:#5a5c5e">Prev</div>
<div class="a" style="left:1779px;top:852px;width:36px;height:40px;border-radius:4px;background:#003a7d"></div>
<div class="t" style="left:1779px;top:863.3px;width:36px;text-align:center;font-size:17px;color:#8a95a3">1</div>
<div class="t" style="left:1829px;top:863.3px;font-size:17.4px;color:#5a5c5e">Next</div>
<svg class="a" style="left:1873px;top:864px" width="11" height="16" viewBox="0 0 11 16"><path d="M2 1.5 L8.5 8 L2 14.5" stroke="#5c5c5c" stroke-width="2.2" fill="none" stroke-linecap="round"/></svg>
<div class="a" style="left:579px;top:46px;width:750px;height:900px;background:#fff;border-radius:8px;border:1px solid rgba(0,0,0,0.1);background-clip:padding-box"></div>
<div class="t" style="left:600px;top:70px;font-size:20.7px;line-height:22px;height:22px;color:#3a434d;-webkit-text-stroke:0.35px #3a434d">Choose on map</div>
<svg class="a" style="left:1293px;top:72px" width="16" height="16" viewBox="0 0 16 16"><path d="M1.5 1.5 L14.5 14.5 M14.5 1.5 L1.5 14.5" stroke="#3a3f44" stroke-width="1.4"/></svg>
<div class="a" style="left:600px;top:123px;width:708px;height:313px;overflow:hidden;border-radius:5px;background:#f5f5f5">
<svg width="708" height="313" viewBox="600 123 708 313" style="position:absolute;left:0;top:0;font-family:'Liberation Sans',sans-serif">
<!-- beige / landuse areas -->
<path d="M684 123 H800 V300 L684 300 Z" fill="#fcf8f6"/>
<path d="M684 123 H800 V240 L770 222 L740 195 L705 155 L684 137 Z" fill="#f8f4ea"/>
<path d="M800 123 H838 L850 150 L812 250 L800 255 Z" fill="#fcf8f6"/>
<path d="M800 140 L830 150 L808 235 L800 240 Z" fill="#f8f4ea"/>
<path d="M725 235 L790 255 L770 300 L720 290 Z" fill="#f8f4ea"/>
<path d="M600 295 L665 310 L655 370 L600 360 Z" fill="#f9f5ec"/>
<path d="M812 340 L880 355 L900 390 L885 408 L805 385 Z" fill="#f9f5ec"/>
<path d="M1000 198 L1308 200 V435 H985 L1000 280 Z" fill="#f8f4ea"/>
<path d="M1125 207 L1200 210 L1215 255 L1190 262 L1150 235 Z" fill="#f6f6f6"/>
<path d="M1100 255 L1120 250 L1140 262 L1115 300 L1095 300 Z" fill="#f6f6f6"/>
<path d="M1170 210 L1220 212 L1215 250 L1180 240 Z" fill="#faf6ea"/>
<!-- buildings -->
<path d="M700 168 L728 175 L730 250 L712 258 L700 245 Z" fill="#e8e9ed"/>
<path d="M623 210 L668 193 L680 215 L640 236 Z" fill="#e8e9ed"/>
<path d="M683 313 L712 320 L718 370 L700 382 L680 375 Z" fill="#e8e9ed"/>
<path d="M641 315 L658 318 L654 335 L641 333 Z" fill="#e8e9ed"/>
<path d="M1155 238 L1180 240 L1178 262 L1153 260 Z" fill="#e8e9ed"/>
<path d="M1100 262 L1200 268 L1198 300 L1098 296 Z" fill="#e9eaee"/>
<path d="M1230 240 L1300 246 L1300 262 L1230 258 Z" fill="#e9eaee"/>
<path d="M1000 300 L1060 305 L1058 330 L1000 325 Z" fill="#ebebef"/>
<path d="M1100 310 L1200 318 L1198 345 L1098 338 Z" fill="#f2f2f4"/>
<path d="M1095 372 L1185 378 L1183 398 L1093 392 Z" fill="#ececf0"/>
<path d="M1010 380 L1060 383 L1060 418 L1008 415 Z" fill="#ececf0"/>
<path d="M1240 380 L1300 395 L1308 420 L1235 405 Z" fill="#ececf0"/>
<path d="M612 230 L640 290 M618 228 L646 288 M625 252 L690 235 L700 290 M630 258 L686 242 L694 292" stroke="#dedfe3" stroke-width="1.5" fill="none"/>
<!-- park -->
<path d="M1135 123 H1308 V140 L1135 135 Z" fill="#c3edd0"/>
<!-- roads -->
<g stroke="#cfd9e3" fill="none" stroke-linecap="round">
 <path d="M600 151 L660 123" stroke-width="6"/>
 <path d="M600 185 L683 140" stroke-width="6"/>
 <path d="M600 216 L684 172" stroke-width="6"/>
 <path d="M614 123 L603 127 L629 199" stroke-width="6"/>
 <path d="M681 123 L686 200 L690 272 L688 290" stroke-width="6"/>
 <path d="M770 123 L735 205" stroke-width="5"/>
 <path d="M768 124 L800 137" stroke-width="4"/>
 <path d="M600 283 L675 309" stroke-width="5"/>
 <path d="M683 290 L660 340 L639 397 L625 435" stroke-width="5"/>
 <path d="M686 292 C720 300 750 315 768 333" stroke-width="5"/>
 <path d="M600 405 L650 420" stroke-width="4"/>
 <path d="M800 365 L890 390 L975 416 L1010 430" stroke-width="6"/>
  <path d="M1050 236 L1210 266 L1308 272" stroke-width="6"/>
 <path d="M1060 294 L1308 320" stroke-width="6"/>
 <path d="M1050 354 L1308 372" stroke-width="5"/>
 <path d="M990 400 L1308 415" stroke-width="5"/>
 <path d="M1117 205 L1089 300 L1068 435" stroke-width="8"/>
 <path d="M1224 205 L1219 300 L1204 435" stroke-width="8"/>
 <path d="M945 300 L1308 435" stroke-width="0"/>
</g>
<!-- main wide road top -->
<path d="M800 123 L1010 136 L1160 148 L1308 155 V204 L1150 197 L1007 182 L878 154 L800 135 Z" fill="#cdd8e3"/><path d="M1007 182 L1150 197 L1308 204 V214 L1150 207 L1007 192 Z" fill="#d9e0e8"/>
<path d="M945 123 L1010 127 L1130 130" stroke="#eef1f4" stroke-width="5" fill="none"/>
<!-- Krishna Rajendra Rd -->
<path d="M865 150 L835 230 L805 310 L760 350 L720 385 L700 410 L690 436" stroke="#d3dce6" stroke-width="13" fill="none"/>
<!-- south road through circle -->
<path d="M925 150 L950 250 L965 330 L978 390 L982 436" stroke="#d5dde6" stroke-width="18" fill="none"/>
<!-- circle -->
<circle cx="954" cy="278" r="108" fill="#9dcdf2" fill-opacity="0.55" stroke="#64b4f4" stroke-width="2.2"/>
<clipPath id="cc"><circle cx="954" cy="278" r="107"/></clipPath>
<g clip-path="url(#cc)" fill="#9cc6ea" opacity="0.28">
 <path d="M960 200 L985 192 L995 210 L970 220 Z"/><path d="M1000 215 L1030 205 L1045 230 L1015 240 Z"/>
 <path d="M975 240 L1000 235 L1010 262 L985 268 Z"/><path d="M1020 250 L1050 245 L1058 275 L1028 280 Z"/>
 <path d="M990 300 L1040 290 L1050 320 L1000 330 Z"/><path d="M1005 340 L1045 332 L1050 360 L1010 368 Z"/>
 <path d="M860 330 L900 320 L915 355 L875 365 Z"/><path d="M910 360 L940 352 L948 380 L918 386 Z"/>
 <path d="M850 210 L880 200 L890 230 L860 240 Z"/><path d="M985 1 Z"/>
 <path d="M1030 300 L1062 310 L1062 320 L1025 312 Z"/>
</g>
<path d="M1026 283 L1062 290" stroke="#9cc6ea" stroke-width="6" opacity="0.5"/>
<path d="M920 172 L948 172 L960 250 L972 330 L985 386 L962 386 L950 330 L938 250 Z" fill="#a6cdee" opacity="0.55"/>
<!-- labels -->
<g font-family="Liberation Sans" paint-order="stroke" stroke="#fff" stroke-width="3" stroke-linejoin="round">
 <text x="0" y="0" font-size="15.5" font-weight="bold" fill="#4d6073" transform="translate(803,309) rotate(-68)">Krishna Rajendra Rd</text>
 <text x="0" y="0" font-size="15.5" font-weight="bold" fill="#4d6073" transform="translate(783,368) rotate(22)">VVI Rd</text>
 <text x="0" y="0" font-size="16" font-weight="bold" fill="#4d6073" transform="translate(1113,302) rotate(5.2)">New Bamboo Bazaar Rd</text>
 <text x="0" y="0" font-size="15" font-weight="bold" fill="#4d6073" transform="translate(1094,364) rotate(4.5)">Gangammachari St</text>
 <text x="632" y="270" font-size="17" fill="#9b4fdf">Bengaluru Fort</text>
 <text x="646" y="284" font-size="13.5" fill="#9b4fdf">ಬೆಂಗಳೂರು ಕೋಟೆ</text>
 <text x="1013" y="234" font-size="17.3" fill="#d3691f">Kerala Hotel</text>
 <text x="780" y="408" font-size="17.3" fill="#5f7282" text-anchor="end">Vani Vilas Government</text>
 <text x="780" y="426" font-size="17.3" fill="#5f7282" text-anchor="end">Womens College</text>
</g>
<text x="890" y="288" font-size="16" fill="#5a87ab">SLN COLLEGE</text>
<text x="890" y="305" font-size="16" fill="#5a87ab">OF ARTS &amp;...</text>
<!-- pins -->
<g>
 <path d="M747 183 L740 176 A13 13 0 1 1 754 176 Z" fill="#fff"/>
 <circle cx="747" cy="167" r="11.5" fill="#ea4558"/>
 <text x="747" y="172.5" font-size="14" font-weight="bold" fill="#fff" text-anchor="middle">H</text>
 <path d="M765 284 L758 277 A13 13 0 1 1 772 277 Z" fill="#fff"/>
 <circle cx="765" cy="267" r="11.5" fill="#b16ce8"/>
 <path d="M759.5 274 H770.5 V272 L768.5 270.5 L767.8 265 H769.5 V260 H768 V261.8 H766.5 V260 H763.5 V261.8 H762 V260 H760.5 V265 H762.2 L761.5 270.5 L759.5 272 Z" fill="#fff"/>
 <path d="M993 242 L986 235 A12.5 12.5 0 1 1 1000 235 Z" fill="#e4eef6"/>
 <circle cx="993" cy="227" r="11" fill="#c98a5e"/>
 <path d="M989 221 V232 M987.5 221 V226 A1.5 1.5 0 0 0 990.5 226 V221 M996 221 C998 223 998 228 996 229 V232" stroke="#fff" stroke-width="1.4" fill="none"/>
 <path d="M871 305 C866 299 859 295 859 287 A12 12 0 0 1 883 287 C883 295 876 299 871 305 Z" fill="#d3e7f6"/>
 <path d="M871 302 C867 297 861 294 861 287 A10 10 0 0 1 881 287 C881 294 875 297 871 302 Z" fill="#6b9cc2"/>
 <circle cx="871" cy="287" r="4.2" fill="#c4e0f6"/>
 <path d="M798 426 C793 420 786 416 786 408 A12 12 0 0 1 810 408 C810 416 803 420 798 426 Z" fill="#fff"/>
 <path d="M798 423 C794 418 788 415 788 408 A10 10 0 0 1 808 408 C808 415 802 418 798 423 Z" fill="#74868f"/>
 <circle cx="798" cy="408" r="4.2" fill="#fff"/>
 <!-- bus stops -->
 <rect x="849" y="133" width="18" height="18" rx="6" fill="#fff"/><rect x="850.5" y="134.5" width="15" height="15" rx="5" fill="#3f5566"/><rect x="853.5" y="137" width="9" height="9" rx="1.8" fill="#fff"/><rect x="854.5" y="138" width="7" height="3.2" fill="#3f5566"/><circle cx="855.5" cy="143.8" r="0.9" fill="#3f5566"/><circle cx="860.5" cy="143.8" r="0.9" fill="#3f5566"/><rect x="854" y="145.5" width="2" height="1.6" fill="#fff"/><rect x="860" y="145.5" width="2" height="1.6" fill="#fff"/>
 <rect x="994" y="137" width="18" height="18" rx="6" fill="#fff"/><rect x="995.5" y="138.5" width="15" height="15" rx="5" fill="#3f5566"/><rect x="998.5" y="141" width="9" height="9" rx="1.8" fill="#fff"/><rect x="999.5" y="142" width="7" height="3.2" fill="#3f5566"/><circle cx="1000.5" cy="147.8" r="0.9" fill="#3f5566"/><circle cx="1005.5" cy="147.8" r="0.9" fill="#3f5566"/><rect x="999" y="149.5" width="2" height="1.6" fill="#fff"/><rect x="1005" y="149.5" width="2" height="1.6" fill="#fff"/>
 <rect x="726" y="342" width="18" height="18" rx="6" fill="#fff"/><rect x="727.5" y="343.5" width="15" height="15" rx="5" fill="#3f5566"/><rect x="730.5" y="346" width="9" height="9" rx="1.8" fill="#fff"/><rect x="731.5" y="347" width="7" height="3.2" fill="#3f5566"/><circle cx="732.5" cy="352.8" r="0.9" fill="#3f5566"/><circle cx="737.5" cy="352.8" r="0.9" fill="#3f5566"/><rect x="731" y="354.5" width="2" height="1.6" fill="#fff"/><rect x="737" y="354.5" width="2" height="1.6" fill="#fff"/>
 <!-- red marker -->
 <path d="M954 278 C950 268 939 262 939 249 A15 15 0 0 1 969 249 C969 262 958 268 954 278 Z" fill="#ea4335" stroke="#c5221f" stroke-width="0.8"/>
 <circle cx="954" cy="249" r="5.5" fill="#b31412"/>
 <!-- yellow blobs -->
 <ellipse cx="1013" cy="129" rx="7" ry="5" fill="#f2f25a" opacity="0.8"/>
 <ellipse cx="1013" cy="182" rx="7" ry="5" fill="#f2f25a" opacity="0.8"/>
</g>
<!-- arrows -->
<g fill="#6f8396">
 <path d="M1146 178 H1158 L1154 174 M1158 178 L1154 182" stroke="#6f8396" stroke-width="2.2" fill="none"/>
 <path d="M1026 283 H1014 L1018 279 M1014 283 L1018 287" stroke="#7d9ab4" stroke-width="2" fill="none"/>
 <path d="M745 323 L734 319 L737 315 M734 319 L737 324" stroke="#6f8396" stroke-width="2" fill="none"/>
 <path d="M1096 252 L1094 263 L1090 259 M1094 263 L1098 260" stroke="#6f8396" stroke-width="2" fill="none"/>
 <path d="M979 383 V395 L975 391 M979 395 L983 391" stroke="#6f8396" stroke-width="2" fill="none"/>
</g>
<!-- green park label -->
<text x="1290" y="134" font-size="15" fill="#1f8f5c">Sil</text>
<g font-family="Liberation Sans" font-weight="bold" font-size="15.5" fill="#4d6073" paint-order="stroke" stroke="#fff" stroke-width="3" stroke-linejoin="round"><text x="1239" y="276">C</text><text x="1293" y="277">Kl</text><text x="1297" y="330">d</text></g>
<g font-family="Liberation Sans" font-size="14" fill="#1f8f5c" paint-order="stroke" stroke="#fff" stroke-width="2"><text x="1297" y="157">e</text><text x="1293" y="171">ಶೆ</text><text x="1291" y="185">ಮ</text><text x="1286" y="199">ಉದ</text></g>
<!-- search box -->
<rect x="1013.5" y="136.5" width="287" height="39" rx="3" fill="#fff" stroke="#8f9399" stroke-width="1"/>
<text x="1029" y="163" font-size="17.5" fill="#9aa0a6">Search location</text>
<!-- zoom controls -->
<rect x="1246" y="229" width="50" height="102" rx="3" fill="#fff"/>
<path d="M1259 254 H1281 M1270 243 V265" stroke="#666" stroke-width="3.5"/>
<path d="M1254 280.5 H1288" stroke="#e6e6e6" stroke-width="1"/>
<path d="M1259 305 H1281" stroke="#666" stroke-width="3.5"/>
<circle cx="1271" cy="380" r="25" fill="#fff"/>
<path d="M1266 371 L1271 366 L1276 371 M1266 389 L1271 394 L1276 389 M1262 375 L1257 380 L1262 385 M1280 375 L1285 380 L1280 385" stroke="#666" stroke-width="2.2" fill="none"/>
<text x="0" y="0" font-size="13" font-weight="bold" fill="#7d8fa0" transform="translate(1292,420) rotate(25)">2nd</text>
<!-- attribution -->
<rect x="865" y="418" width="443" height="18" fill="#f5f5f5" fill-opacity="0.85"/>
<text x="872" y="432" font-size="12.4" fill="#222">Keyboard shortcuts</text>
<path d="M987 420 V435 M1140 420 V435 M1190 420 V435" stroke="#e0e0e0" stroke-width="1"/>
<text x="995" y="432" font-size="12.4" fill="#222">Map data ©2026 Google</text>
<text x="1146" y="432" font-size="12.4" fill="#222">Terms</text>
<text x="1196" y="432" font-size="12.4" fill="#222">Report a map error</text>
<!-- google logo -->
<rect x="612" y="409" width="76" height="22" fill="#f5f5f5" opacity="0"/><g font-size="21" font-weight="bold" font-family="Liberation Sans" paint-order="stroke" stroke="#fff" stroke-width="2.5">
 <text x="612" y="427" fill="#4285f4">G</text><text x="627.5" y="427" fill="#ea4335">o</text><text x="640" y="427" fill="#fbbc05">o</text><text x="652.5" y="427" fill="#4285f4">g</text><text x="665" y="427" fill="#34a853">l</text><text x="671" y="427" fill="#ea4335">e</text>
</g>
</svg>
</div>

<div class="a" style="left:580px;top:447px;width:748px;height:389px;overflow:hidden"><div class="a" style="left:-580px;top:-447px;width:1919px;height:925px"><div class="t" style="left:610px;top:466px;font-size:15px;letter-spacing:-0.3px;color:#4b5158">Name <span style="color:#f0606f">*</span></div><div class="a" style="left:610px;top:492px;width:324px;height:40px;border:1px solid #a3a8ae;border-radius:5px;background:#fff"></div><div class="t" style="left:626px;top:503px;font-size:17.5px;color:#3d434a">Bengaluru</div><div class="t" style="left:954px;top:466px;font-size:15px;letter-spacing:-0.3px;color:#4b5158">Geo radius <span style="color:#f0606f">*</span></div><div class="a" style="left:954px;top:492px;width:324px;height:40px;border:1px solid #a3a8ae;border-radius:5px;background:#fff"></div><div class="t" style="left:970px;top:503px;font-size:17.5px;color:#3d434a">100</div><div class="t" style="left:610px;top:550px;font-size:15px;letter-spacing:-0.3px;color:#4b5158">Line address <span style="color:#f0606f">*</span></div><div class="a" style="left:610px;top:576px;width:668px;height:40px;border:1px solid #a3a8ae;border-radius:5px;background:#fff"></div><div class="t" style="left:626px;top:587px;font-size:17.5px;color:#3d434a">Bengaluru</div><div class="t" style="left:610px;top:634px;font-size:15px;letter-spacing:-0.3px;color:#4b5158">City <span style="color:#f0606f">*</span></div><div class="a" style="left:610px;top:660px;width:324px;height:40px;border:1px solid #a3a8ae;border-radius:5px;background:#fff"></div><div class="t" style="left:626px;top:671px;font-size:17.5px;color:#3d434a">Bengaluru</div><div class="t" style="left:954px;top:634px;font-size:15px;letter-spacing:-0.3px;color:#4b5158">State <span style="color:#f0606f">*</span></div><div class="a" style="left:954px;top:660px;width:324px;height:40px;border:1px solid #a3a8ae;border-radius:5px;background:#fff"></div><div class="t" style="left:970px;top:671px;font-size:17.5px;color:#3d434a">Karnataka</div><div class="t" style="left:610px;top:718px;font-size:15px;letter-spacing:-0.3px;color:#4b5158">Country <span style="color:#f0606f">*</span></div><div class="a" style="left:610px;top:744px;width:324px;height:40px;border:1px solid #a3a8ae;border-radius:5px;background:#fff"></div><div class="t" style="left:626px;top:755px;font-size:17.5px;color:#3d434a">India</div><div class="t" style="left:954px;top:718px;font-size:15px;letter-spacing:-0.3px;color:#4b5158">Zip code <span style="color:#f0606f">*</span></div><div class="a" style="left:954px;top:744px;width:324px;height:40px;border:1px solid #a3a8ae;border-radius:5px;background:#fff"></div><div class="t" style="left:610px;top:802px;font-size:15px;letter-spacing:-0.3px;color:#4b5158">Latitude <span style="color:#f0606f">*</span></div><div class="a" style="left:610px;top:828px;width:324px;height:40px;border:1px solid #a3a8ae;border-radius:5px;background:#fff"></div><div class="t" style="left:954px;top:802px;font-size:15px;letter-spacing:-0.3px;color:#4b5158">Longitude <span style="color:#f0606f">*</span></div><div class="a" style="left:954px;top:828px;width:324px;height:40px;border:1px solid #a3a8ae;border-radius:5px;background:#fff"></div></div></div>
<svg class="a" style="left:1291px;top:466px" width="14" height="10" viewBox="0 0 14 10"><path d="M7 0.5 L13.5 9.5 H0.5Z" fill="#d6d6d6"/></svg>
<div class="a" style="left:1294px;top:486px;width:8px;height:289px;border-radius:4px;background:#d6d6d6"></div>
<svg class="a" style="left:1291px;top:822px" width="14" height="10" viewBox="0 0 14 10"><path d="M7 9.5 L13.5 0.5 H0.5Z" fill="#d6d6d6"/></svg>
<div class="a" style="left:580px;top:836px;width:748px;height:1px;background:#e6e6e6"></div>
<div class="a" style="left:580px;top:837px;width:748px;height:90px;background:#fdfdfd"></div>
<div class="a" style="left:1113px;top:862px;width:90px;height:40px;border:1px solid #9a9ea3;border-radius:4px;background:#fff"></div>
<div class="t" style="left:1113px;top:873px;width:90px;text-align:center;font-size:17px;color:#464b51">Close</div>
<div class="a" style="left:1213px;top:862px;width:90px;height:40px;border-radius:4px;background:#0a72f1"></div>
<div class="t" style="left:1213px;top:873px;width:90px;text-align:center;font-size:16.5px;color:#fff">Save</div>
<div class="a" style="left:1907px;top:12px;width:12px;height:875px;background:#d9d9d9;border-radius:5px"></div>
<div class="a" style="left:0;top:923px;width:1919px;height:2px;background:#262626"></div>
</body></html>
